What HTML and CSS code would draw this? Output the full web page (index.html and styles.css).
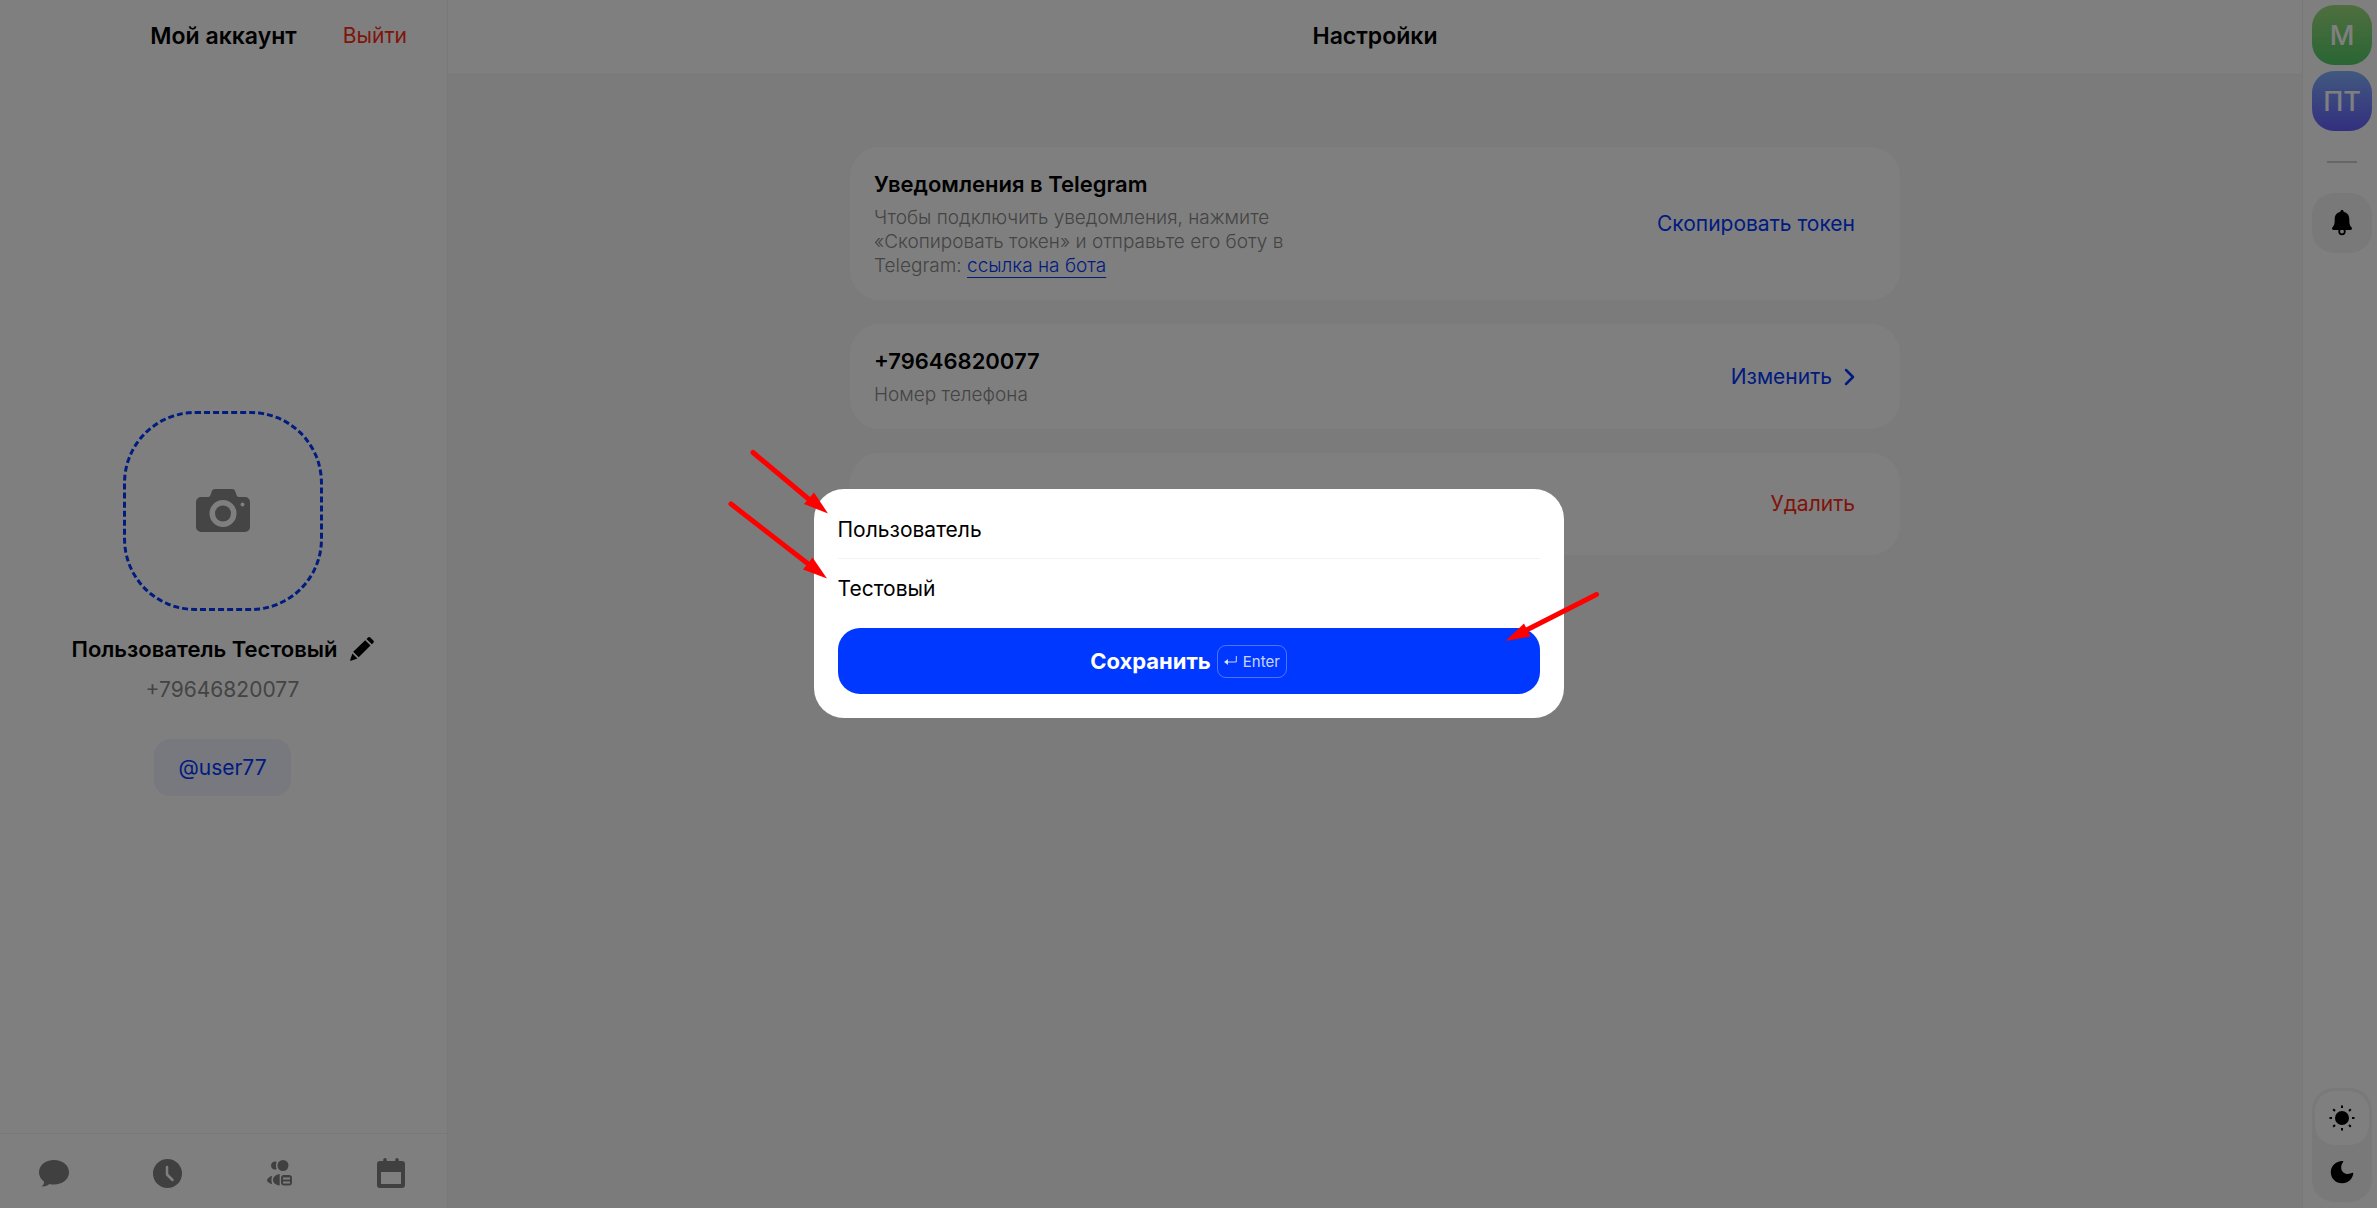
FILE: index.html
```html
<!DOCTYPE html>
<html lang="ru">
<head>
    <meta charset="UTF-8">
    <title>Настройки</title>
    <link rel="stylesheet" href="styles.css">
</head>
<body>
    <div class="app">
        <aside class="sidebar">
            <header class="sidebar-header">
                <h2 class="title">Мой аккаунт</h2>
                <button class="link-button danger logout" type="button">Выйти</button>
            </header>

            <div class="profile">
                <button class="photo" type="button" aria-label="Загрузить фото">
                    <svg width="54" height="44" viewBox="0 0 54 44">
                        <path fill="currentColor" fill-rule="evenodd" d="M19 0h17c2 0 3 1 3.500 3l1 3c.5 1.500 1.500 2 3 2H49a5 5 0 0 1 5 5v25a5 5 0 0 1-5 5H5a5 5 0 0 1-5-5V13a5 5 0 0 1 5-5h6.500c1.500 0 2.500-.5 3-2l1-3c.5-2 1.500-3 3.500-3zM27 11a13.500 13.500 0 1 0 0 27 13.500 13.500 0 0 0 0-27zm19.500 2.500a2 2 0 1 0 0 4 2 2 0 0 0 0-4z"/>
                        <circle cx="27" cy="24.500" r="8" fill="currentColor"/>
                    </svg>
                </button>
                <div class="name-row">
                    <span class="title small">Пользователь Тестовый</span>
                    <button type="button" aria-label="Редактировать имя">
                        <svg width="24" height="24" viewBox="0 0 24 24" fill="currentColor">
                            <path d="M3.200 14.800 15.200 3.200l5.300 5.300L8.700 20.300zM16.500 2 18 .600c.7-.7 1.600-.7 2.300 0l3 3c.7.7.7 1.600 0 2.300L21.800 7.300zM2.400 16.400l5 5-6.200 2.300C.4 24 0 23.500.2 22.700z"/>
                        </svg>
                    </button>
                </div>
                <span class="phone">+79646820077</span>
                <button class="username" type="button">@user77</button>
            </div>

            <nav class="tabs">
                <a href="#chats" aria-label="Чаты">
                    <svg width="30" height="28" viewBox="0 0 30 28" fill="currentColor">
                        <path d="M15 1C6.500 1 0 6.200 0 13.300c0 4 2 7.300 5 9.400.2 2-.8 3.600-2.500 4.600 3 .4 6-.6 8-2.300 1.500.4 3 .500 4.500.500 8.500 0 15-5.300 15-12.300C30 6.200 23.500 1 15 1z"/>
                    </svg>
                </a>
                <a href="#history" aria-label="История">
                    <svg width="29" height="29" viewBox="0 0 29 29">
                        <circle cx="14.500" cy="14.500" r="14.500" fill="currentColor"/>
                        <path d="M14 8v7.500l5.500 5.500" fill="none" stroke="#fff" stroke-width="2.500" stroke-linecap="round" stroke-linejoin="round"/>
                    </svg>
                </a>
                <a href="#staff" aria-label="Сотрудники">
                    <svg width="26" height="26" viewBox="0 0 26 26" fill="currentColor">
                        <circle cx="16" cy="5.500" r="5.500"/>
                        <path d="M9.700 1.800A4 4 0 0 0 4 5.500a4 4 0 0 0 5.700 3.700c-1-2.300-1-5.100 0-7.400zM5.200 15.800C2.500 16.800 0 18.500 0 20.300s2.500 3.200 5.200 3.900c-1-2.500-1-5.900 0-8.400zM12.700 14C9 14.500 6 17 6 20s3 5 6.700 5.600z"/>
                        <path fill-rule="evenodd" d="M17 15h5a3 3 0 0 1 3 3v4.500a3 3 0 0 1-3 3h-5a3 3 0 0 1-3-3V18a3 3 0 0 1 3-3zM16 17.500v2h7v-2zM16 21.500v2h7v-2z"/>
                    </svg>
                </a>
                <a href="#calendar" aria-label="Календарь">
                    <svg width="28" height="30" viewBox="0 0 28 30" fill="currentColor">
                        <path fill-rule="evenodd" d="M8 0a1.800 1.800 0 0 1 1.800 1.800V3h8.400V1.800a1.800 1.800 0 0 1 3.600 0V3H25a3 3 0 0 1 3 3v21a3 3 0 0 1-3 3H3a3 3 0 0 1-3-3V6a3 3 0 0 1 3-3h3.200V1.800A1.800 1.800 0 0 1 8 0zM4 14v12h20V14z"/>
                    </svg>
                </a>
            </nav>
        </aside>

        <main class="main">
            <header class="main-header">
                <h1 class="title">Настройки</h1>
            </header>
            <div class="cards">
                <section class="card">
                    <div class="card-text">
                        <h3 class="title small">Уведомления в Telegram</h3>
                        <p>Чтобы подключить уведомления, нажмите «Скопировать токен» и отправьте его боту в Telegram: <a href="#bot">ссылка на бота</a></p>
                    </div>
                    <button class="link-button" type="button">Скопировать токен</button>
                </section>
                <section class="card">
                    <div class="card-text">
                        <h3 class="title small">+79646820077</h3>
                        <p>Номер телефона</p>
                    </div>
                    <button class="link-button" type="button">
                        Изменить
                        <svg width="11" height="18" viewBox="0 0 11 18">
                            <path d="M2 2l7 7-7 7" fill="none" stroke="currentColor" stroke-width="2.500" stroke-linecap="round" stroke-linejoin="round"/>
                        </svg>
                    </button>
                </section>
                <section class="card">
                    <button class="link-button danger" type="button">Удалить</button>
                </section>
            </div>
        </main>

        <aside class="rail">
            <button class="avatar green" type="button">М</button>
            <button class="avatar blue" type="button">ПТ</button>
            <hr class="rail-line">
            <button class="bell" type="button" aria-label="Уведомления">
                <svg width="20" height="26" viewBox="0 0 20 26">
                    <path fill="currentColor" d="M10 0c1 0 1.600.7 1.600 1.700 3.600.8 5.700 3.500 5.700 7.300 0 5 .5 6.300 1.900 8 .5.600.8 1 .8 1.500 0 .9-.7 1.500-1.700 1.500H1.700C.7 20 0 19.400 0 18.500 0 18 .3 17.600.8 17c1.400-1.700 1.900-3 1.900-8 0-3.800 2.100-6.500 5.700-7.300C8.400.7 9 0 10 0z"/>
                    <circle cx="10" cy="21.500" r="2.800" fill="none" stroke="currentColor" stroke-width="1.800"/>
                </svg>
            </button>
            <div class="theme-switch">
                <button class="active" type="button" aria-label="Светлая тема">
                    <svg width="26" height="26" viewBox="0 0 26 26">
                        <circle cx="13" cy="13" r="7" fill="currentColor"/>
                        <path d="M13 .500v2.500M13 23v2.500M.500 13h2.500M23 13h2.500M4.200 4.200l1.800 1.800M20 20l1.800 1.800M4.200 21.800 6 20M20 6l1.800-1.800" stroke="currentColor" stroke-width="2"/>
                    </svg>
                </button>
                <button type="button" aria-label="Тёмная тема">
                    <svg width="24" height="24" viewBox="0 0 24 24">
                        <path fill="currentColor" d="M12.500 1c.7-.1 1 .5.600 1.100-1.200 1.700-1.900 3.400-1.900 5.400 0 4 3 6.500 6.600 6.500 1.600 0 3.200-.5 4.500-1.200.6-.3 1.100 0 1 .7C22.500 19 18.200 23.200 12.300 23.200 5.600 23.200.800 18.300.800 12.200.800 6.300 5.600 1 12.500 1z"/>
                    </svg>
                </button>
            </div>
        </aside>
    </div>

    <div class="overlay">
        <form class="modal" role="dialog" aria-label="Имя пользователя">
            <input class="field" type="text" aria-label="Имя" value="Пользователь">
            <input class="field" type="text" aria-label="Фамилия" value="Тестовый">
            <button class="save" type="submit">
                Сохранить
                <span class="key">
                    <svg width="13" height="12" viewBox="0 0 13 12">
                        <path d="M12.300 1v6H2" fill="none" stroke="currentColor"/>
                        <path d="M0 7l4-3v6z" fill="currentColor"/>
                    </svg>
                    Enter
                </span>
            </button>

            <svg class="arrows" width="920" height="230" viewBox="0 0 920 230">
                <g stroke="#f00" stroke-width="5" stroke-linecap="round">
                    <path d="M53 12.500l55 46M31 64l76 59M896.500 154.500l-69 35"/>
                </g>
                <g fill="#f00">
                    <path d="M128 73.500l-24-9.500L114 52.500z"/>
                    <path d="M127 138.500l-24-9L112.500 117.500z"/>
                    <path d="M805.500 201l18.500-17.500 6.500 13z"/>
                </g>
            </svg>
        </form>
    </div>
</body>
</html>
```
FILE: styles.css
```css
* {
    box-sizing: border-box;
}
body {
    margin: 0;
    font-family: Inter, "Liberation Sans", sans-serif;
    font-size: 21px;
    color: #000;
    background: #f7f7f7;
}
button {
    font: inherit;
    color: inherit;
    background: none;
    border: none;
    padding: 0;
    cursor: pointer;
}
svg {
    display: block;
}
.app {
    display: flex;
    min-height: 100vh;
}
.title {
    margin: 0;
    font-size: 23px;
    line-height: 30px;
    font-weight: 600;
}
.small {
    font-size: 22px;
}
.link-button {
    display: flex;
    align-items: center;
    gap: 12px;
    line-height: 30px;
    color: #0038ff;
}
.danger {
    color: #ff2a14;
}

/* left column */
.sidebar {
    width: 448px;
    flex: none;
    display: flex;
    flex-direction: column;
    background: #fff;
    border-right: 1px solid #f0f0f0;
}
.sidebar-header {
    display: grid;
    grid-template-columns: 1fr auto 1fr;
    align-items: center;
    height: 74px;
    padding: 0 40px 2px;
}
.sidebar-header .title {
    grid-column: 2;
}
.logout {
    justify-self: end;
}
.profile {
    flex: 1;
    display: flex;
    flex-direction: column;
    align-items: center;
    justify-content: center;
    padding-right: 2px;
}
.photo {
    display: flex;
    align-items: center;
    justify-content: center;
    width: 200px;
    height: 200px;
    border: 3px dashed #0038ff;
    border-radius: 72px;
    color: #8a8a8a;
}
.name-row {
    display: flex;
    align-items: center;
    gap: 12px;
    margin-top: 23px;
}
.phone {
    margin-top: 11px;
    line-height: 30px;
    color: #888;
}
.username {
    margin-top: 34px;
    padding: 0 24px;
    line-height: 57px;
    border-radius: 16px;
    background: #f0f3ff;
    color: #0038ff;
}
.tabs {
    display: flex;
    align-items: center;
    justify-content: space-between;
    height: 75px;
    padding: 4px 42px 0 39px;
    border-top: 1px solid #f0f0f0;
}
.tabs a {
    color: #808080;
}

/* settings */
.main {
    flex: 1;
}
.main-header {
    display: flex;
    align-items: center;
    justify-content: center;
    height: 75px;
    padding-bottom: 2px;
    background: #fff;
    border-bottom: 1px solid #f0f0f0;
}
.cards {
    display: flex;
    flex-direction: column;
    gap: 24px;
    max-width: 1050px;
    margin: 72px auto;
}
.card {
    display: flex;
    align-items: center;
    min-height: 102px;
    padding: 22px 45px 22px 24px;
    border-radius: 30px;
    background: #fff;
}
.card .link-button {
    margin-left: auto;
}
.card-text {
    max-width: 430px;
}
.card-text p {
    margin: 7px 0 0;
    font-size: 19px;
    line-height: 24px;
    font-weight: 300;
    color: #888;
}
.card-text a {
    color: #0038ff;
    text-decoration: underline 1px;
    text-underline-offset: 5px;
    text-decoration-skip-ink: none;
}

/* right column */
.rail {
    width: 75px;
    flex: none;
    display: flex;
    flex-direction: column;
    align-items: center;
    padding: 5px 5px 6px 9px;
    background: #fff;
    border-left: 1px solid #f0f0f0;
}
.avatar,
.bell {
    display: flex;
    align-items: center;
    justify-content: center;
    width: 60px;
    height: 60px;
    border-radius: 22px;
}
.avatar {
    margin-bottom: 6px;
    font-size: 27px;
    font-weight: 500;
    color: #fff;
}
.green {
    background: linear-gradient(#a0de7e, #54cb68);
}
.blue {
    background: linear-gradient(#82b1ff, #665fff);
}
.rail-line {
    width: 30px;
    height: 2px;
    margin: 24px 0 30px;
    border: none;
    background: #ccc;
}
.bell {
    background: #f2f2f2;
}
.theme-switch {
    margin-top: auto;
    padding: 3px;
    border-radius: 22px;
    background: #f2f2f2;
}
.theme-switch button {
    display: flex;
    align-items: center;
    justify-content: center;
    width: 54px;
    height: 54px;
    border-radius: 20px;
}
.theme-switch .active {
    background: #fff;
}

/* name dialog */
.overlay {
    position: fixed;
    inset: 0;
    display: flex;
    align-items: center;
    justify-content: center;
    padding-bottom: 1px;
    background: rgba(0, 0, 0, 0.5);
}
.modal {
    position: relative;
    display: flex;
    flex-direction: column;
    width: 100%;
    max-width: 750px;
    padding: 12px 24px 24px;
    border-radius: 30px;
    background: #fff;
}
.field {
    height: 58px;
    padding: 0;
    border: none;
    border-bottom: 1px solid #f3f3f3;
    outline: none;
    font: inherit;
    color: #000;
    background: none;
}
.field + .field {
    border-bottom: none;
}
.save {
    display: flex;
    align-items: center;
    justify-content: center;
    gap: 6px;
    height: 66px;
    margin-top: 11px;
    border-radius: 22px;
    font-size: 22px;
    font-weight: 700;
    color: #fff;
    background: #0038ff;
}
.key {
    display: flex;
    align-items: center;
    gap: 6px;
    height: 33px;
    padding: 0 6px;
    border: 1px solid rgba(255, 255, 255, 0.3);
    border-radius: 9px;
    font-size: 15px;
    font-weight: 400;
    color: rgba(255, 255, 255, 0.8);
}
.arrows {
    position: absolute;
    top: -49px;
    left: -114px;
    pointer-events: none;
}
```
